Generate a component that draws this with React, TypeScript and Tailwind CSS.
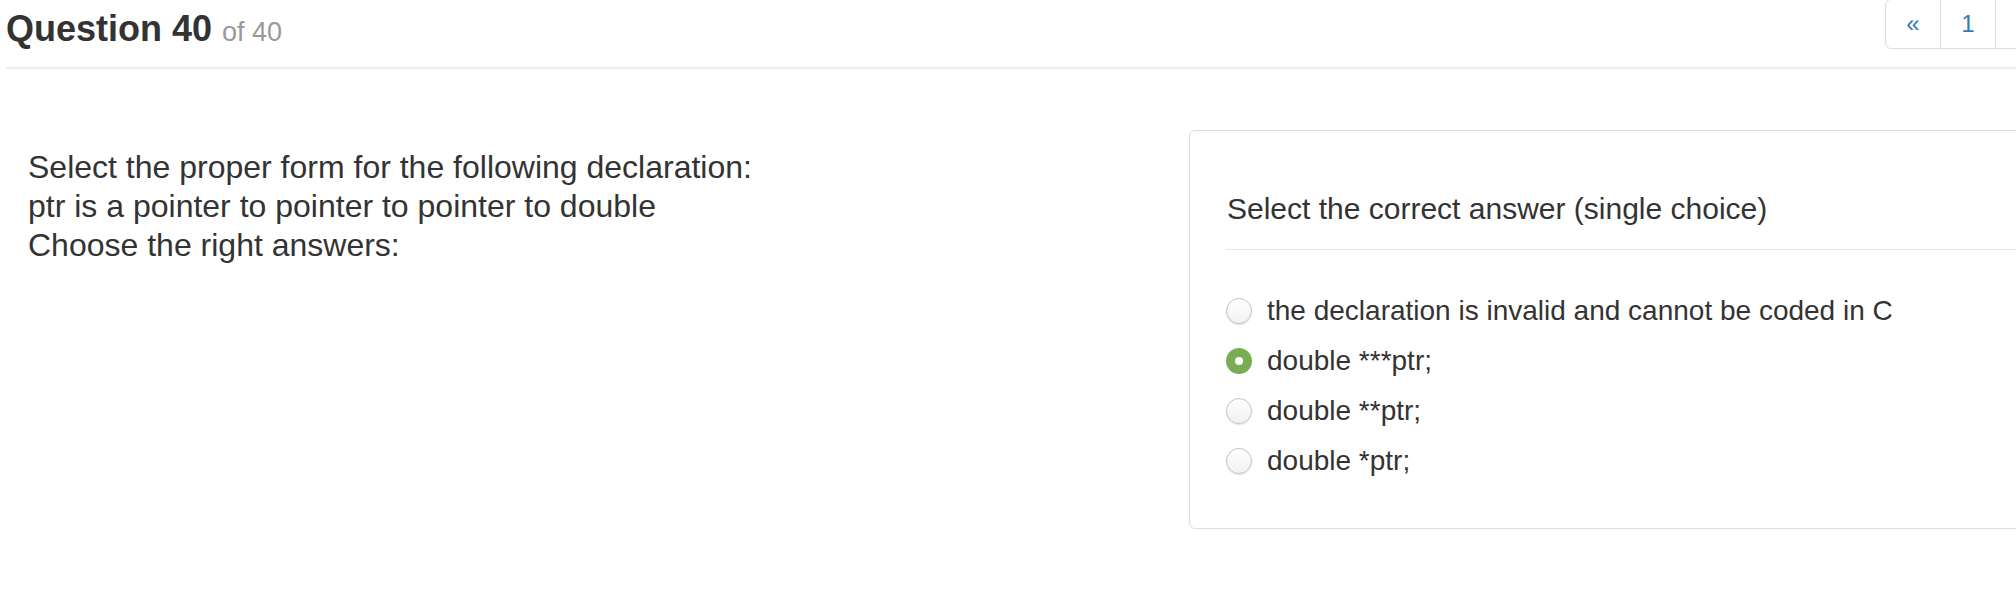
import React from 'react';

const answers = [
  { label: 'the declaration is invalid and cannot be coded in C', checked: false },
  { label: 'double ***ptr;', checked: true },
  { label: 'double **ptr;', checked: false },
  { label: 'double *ptr;', checked: false },
];

const Radio = ({ checked }: { checked: boolean }) =>
  checked ? (
    <span className="flex h-[26px] w-[26px] shrink-0 items-center justify-center rounded-full bg-[#77ad55]">
      <span className="h-[8px] w-[8px] rounded-full bg-white" />
    </span>
  ) : (
    <span className="h-[26px] w-[26px] shrink-0 rounded-full border border-[#c4c4c4] bg-gradient-to-b from-white to-[#f1f1f1] shadow-[0_1px_1px_rgba(0,0,0,0.12)]" />
  );

const App = () => {
  return (
    <div className="h-[600px] w-[2016px] overflow-hidden bg-white font-['Liberation_Sans',Arial,sans-serif] text-[#333]">
      {/* page header */}
      <div className="ml-[6px] flex w-[2200px] items-start border-b-2 border-[#eee] pb-[15px]">
        <h1 className="mt-[9px] w-[1879px] text-[36px] font-bold leading-[40px]">
          Question 40 <span className="text-[27px] font-normal text-[#999]">of 40</span>
        </h1>
        <ul className="-mt-px flex rounded-l-[6px] border border-[#ddd] text-[24px] text-[#337ab7]">
          <li className="flex h-[48px] w-[55px] items-center justify-center border-r border-[#ddd]">«</li>
          <li className="flex h-[48px] w-[55px] items-center justify-center border-r border-[#ddd]">1</li>
          <li className="h-[48px] w-[55px]" />
        </ul>
      </div>

      <div className="flex w-[2300px] px-[6px]">
        {/* question */}
        <div className="w-[1183px] pl-[22px] pt-[79px] text-[32px] leading-[39px]">
          <p>Select the proper form for the following declaration:</p>
          <p>ptr is a pointer to pointer to pointer to double</p>
          <p>Choose the right answers:</p>
        </div>

        {/* answer card */}
        <div className="mt-[61px] w-[1000px] rounded-[6px] border border-[#ddd] px-[36px] pb-[42px] pt-[60px]">
          <div className="border-b border-[#e3e3e3] pb-[22px] pl-[1px] text-[30px] leading-[36px]">
            Select the correct answer (single choice)
          </div>
          <div className="mt-[36px] flex flex-col">
            {answers.map((a) => (
              <label key={a.label} className="flex h-[50px] items-center gap-[15px] text-[28px]">
                <Radio checked={a.checked} />
                <span>{a.label}</span>
              </label>
            ))}
          </div>
        </div>
      </div>
    </div>
  );
};

export default App;
